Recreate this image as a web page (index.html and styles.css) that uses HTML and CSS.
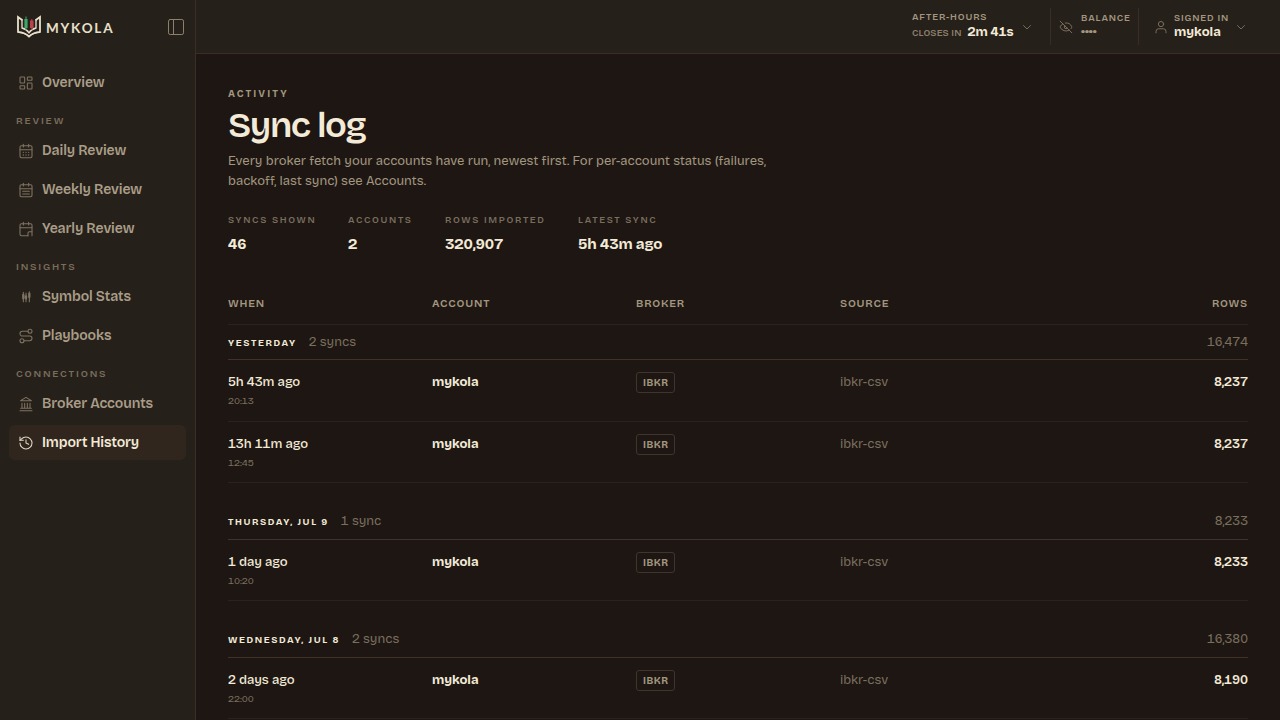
FILE: index.html
```html
<!DOCTYPE html>
<html lang="en">
<head>
    <meta charset="UTF-8">
    <meta name="viewport" content="width=device-width, initial-scale=1.0">
    <title>Mykola - Sync log</title>
    <link rel="stylesheet" href="styles.css">
</head>
<body>
<div class="app">
  <aside class="sidebar">
    <div class="brand">
      <svg class="brand-mark" viewBox="0 0 24 24" fill="none" stroke="#e9e0cc" stroke-width="1.8">
        <path d="M5.500 5.200 1 2v14.800c4.500.2 8 1.800 11 4.700 3-2.900 6.500-4.500 11-4.700V2l-4.500 3.200"/>
        <path d="M1 17.500c4.500 0 8 1.200 11 3.700 3-2.500 6.500-3.700 11-3.700" stroke-width="1.200"/>
        <path d="M5 4.800v8.200c3 .8 5.500 2.400 7 4.800 1.500-2.400 4-4 7-4.800V4.800" stroke-width="1.300"/>
        <path d="M9 1.500v13.500" stroke="#3fa66b" stroke-width="1"/>
        <path d="M9 4v9" stroke="#3fa66b" stroke-width="3.200"/>
        <path d="M14.800 4v11" stroke="#b8434b" stroke-width="1"/>
        <path d="M14.800 5.500v7.500" stroke="#b8434b" stroke-width="3.600"/>
      </svg>
      <span class="brand-name">MYKOLA</span>
      <svg class="icon toggle" viewBox="0 0 24 24"><rect x="3" y="3" width="18" height="18" rx="2"/><path d="M9 3v18"/></svg>
    </div>

    <nav class="nav">
      <a class="nav-item">
        <svg class="icon" viewBox="0 0 24 24"><rect x="3" y="3" width="7" height="9" rx="1"/><rect x="14" y="3" width="7" height="5" rx="1"/><rect x="14" y="12" width="7" height="9" rx="1"/><rect x="3" y="16" width="7" height="5" rx="1"/></svg>
        <span>Overview</span>
      </a>

      <p class="nav-label">Review</p>
      <a class="nav-item">
        <svg class="icon" viewBox="0 0 24 24"><path d="M8 2v4M16 2v4M3 10h18"/><rect x="3" y="4" width="18" height="18" rx="2"/><path d="M8 14h.01M12 14h.01M16 14h.01M8 18h.01M12 18h.01M16 18h.01" stroke-width="2"/></svg>
        <span>Daily Review</span>
      </a>
      <a class="nav-item">
        <svg class="icon" viewBox="0 0 24 24"><path d="M8 2v4M16 2v4M3 10h18"/><rect x="3" y="4" width="18" height="18" rx="2"/><path d="M7 14h10M7 18h10"/></svg>
        <span>Weekly Review</span>
      </a>
      <a class="nav-item">
        <svg class="icon" viewBox="0 0 24 24"><path d="M8 2v4M16 2v4M3 10h18"/><path d="M21 16V6a2 2 0 0 0-2-2H5a2 2 0 0 0-2 2v14a2 2 0 0 0 2 2h10"/><path d="M15 22v-4a2 2 0 0 1 2-2h4M21 16v6"/></svg>
        <span>Yearly Review</span>
      </a>

      <p class="nav-label">Insights</p>
      <a class="nav-item">
        <svg class="icon" viewBox="0 0 24 24"><path d="M8 5v14M12 6v13M17 4v15"/><path d="M8 9v5M12 11v3M17 7v5" stroke-width="3.500"/></svg>
        <span>Symbol Stats</span>
      </a>
      <a class="nav-item">
        <svg class="icon" viewBox="0 0 24 24"><circle cx="6" cy="19" r="3"/><path d="M9 19h8.500a3.500 3.500 0 0 0 0-7h-11a3.500 3.500 0 0 1 0-7H15"/><circle cx="18" cy="5" r="3"/></svg>
        <span>Playbooks</span>
      </a>

      <p class="nav-label">Connections</p>
      <a class="nav-item">
        <svg class="icon" viewBox="0 0 24 24"><path d="M3 22h18M6 18v-7M10 18v-7M14 18v-7M18 18v-7M4 18.500h16M12 2l8 5H4z"/></svg>
        <span>Broker Accounts</span>
      </a>
      <a class="nav-item active">
        <svg class="icon" viewBox="0 0 24 24"><path d="M3 12a9 9 0 1 0 9-9 9.750 9.750 0 0 0-6.740 2.740L3 8"/><path d="M3 3v5h5M12 7v5l4 2"/></svg>
        <span>Import History</span>
      </a>
    </nav>
  </aside>

  <div class="page">
    <header class="topbar">
      <div class="status market">
        <div>
          <p class="status-label">After-hours</p>
          <p class="status-line"><span class="closes">Closes in</span><span class="status-value">2m 41s</span></p>
        </div>
        <svg class="icon chevron" viewBox="0 0 24 24"><path d="m5 9 7 7 7-7"/></svg>
      </div>
      <div class="status balance">
        <svg class="icon" viewBox="0 0 24 24"><path d="M10.733 5.076a10.744 10.744 0 0 1 11.205 6.575 1 1 0 0 1 0 .696 10.747 10.747 0 0 1-1.444 2.490"/><path d="M14.084 14.158a3 3 0 0 1-4.242-4.242"/><path d="M17.479 17.499a10.750 10.750 0 0 1-15.417-5.151 1 1 0 0 1 0-.696 10.750 10.750 0 0 1 4.446-5.143"/><path d="m2 2 20 20"/></svg>
        <div>
          <p class="status-label">Balance</p>
          <p class="masked">••••</p>
        </div>
      </div>
      <div class="status user">
        <svg class="icon" viewBox="0 0 24 24"><circle cx="12" cy="7" r="4.500"/><path d="M3.500 22v-2.500a4.500 4.500 0 0 1 4.500-4.500h8a4.500 4.500 0 0 1 4.500 4.500V22"/></svg>
        <div>
          <p class="status-label">Signed in</p>
          <p class="status-value">mykola</p>
        </div>
        <svg class="icon chevron" viewBox="0 0 24 24"><path d="m5 9 7 7 7-7"/></svg>
      </div>
    </header>

    <main class="content">
      <p class="eyebrow">Activity</p>
      <h1>Sync log</h1>
      <p class="intro">Every broker fetch your accounts have run, newest first. For per-account status (failures,<br>backoff, last sync) see Accounts.</p>

      <dl class="stats">
        <div class="s1"><dt>Syncs shown</dt><dd>46</dd></div>
        <div class="s2"><dt>Accounts</dt><dd>2</dd></div>
        <div class="s3"><dt>Rows imported</dt><dd>320,907</dd></div>
        <div><dt>Latest sync</dt><dd>5h 43m ago</dd></div>
      </dl>

      <section class="log">
        <div class="log-head">
          <span>When</span><span>Account</span><span>Broker</span><span>Source</span><span class="num">Rows</span>
        </div>

        <div class="group">
          <div class="group-head"><h2>Yesterday</h2><span>2 syncs</span><span class="total">16,474</span></div>
          <div class="log-row">
            <div><p class="when">5h 43m ago</p><p class="time">20:13</p></div>
            <strong>mykola</strong>
            <div><span class="badge">IBKR</span></div>
            <span class="source">ibkr-csv</span>
            <span class="num">8,237</span>
          </div>
          <div class="log-row">
            <div><p class="when">13h 11m ago</p><p class="time">12:45</p></div>
            <strong>mykola</strong>
            <div><span class="badge">IBKR</span></div>
            <span class="source">ibkr-csv</span>
            <span class="num">8,237</span>
          </div>
        </div>

        <div class="group">
          <div class="group-head"><h2>Thursday, Jul 9</h2><span>1 sync</span><span class="total">8,233</span></div>
          <div class="log-row">
            <div><p class="when">1 day ago</p><p class="time">10:20</p></div>
            <strong>mykola</strong>
            <div><span class="badge">IBKR</span></div>
            <span class="source">ibkr-csv</span>
            <span class="num">8,233</span>
          </div>
        </div>

        <div class="group">
          <div class="group-head"><h2>Wednesday, Jul 8</h2><span>2 syncs</span><span class="total">16,380</span></div>
          <div class="log-row">
            <div><p class="when">2 days ago</p><p class="time">22:00</p></div>
            <strong>mykola</strong>
            <div><span class="badge">IBKR</span></div>
            <span class="source">ibkr-csv</span>
            <span class="num">8,190</span>
          </div>
        </div>
      </section>
    </main>
  </div>
</div>
</body>
</html>
```
FILE: styles.css
```css
* {
    box-sizing: border-box;
}

body, h1, h2, p, dl, dd {
    margin: 0;
}

body {
    height: 720px;
    overflow: hidden;
    background-color: #1d1613;
    color: #f3ead7;
    font-family: "Bricolage Grotesque", Inter, sans-serif;
    font-size: 13px;
    font-optical-sizing: none;
    font-variant-numeric: tabular-nums;
    line-height: 20px;
}

.app {
    display: flex;
    height: 720px;
}

.icon {
    width: 16px;
    height: 16px;
    flex: none;
    fill: none;
    stroke: currentColor;
    stroke-width: 1.6;
    stroke-linecap: round;
    stroke-linejoin: round;
}

/* sidebar */

.sidebar {
    width: 196px;
    flex: none;
    background-color: #26201a;
    border-right: 1px solid #3d2c25;
}

.brand {
    display: flex;
    align-items: center;
    height: 54px;
    padding: 0 9px 0 17px;
}

.brand-mark {
    width: 24px;
    height: 24px;
}

.brand-name {
    margin-left: 5px;
    padding-top: 1px;
    color: #e9e0cc;
    font-family: Lato, sans-serif;
    font-size: 13.5px;
    font-weight: 700;
    letter-spacing: 1.8px;
}

.toggle {
    width: 20px;
    height: 20px;
    margin-left: auto;
    color: #8d806d;
    stroke-width: 1.2;
}

.nav {
    padding: 11px 9px;
}

.nav-item {
    display: flex;
    align-items: center;
    gap: 8px;
    height: 35px;
    margin-bottom: 4px;
    padding-left: 9px;
    border-radius: 6px;
    color: #a99d88;
    font-size: 14px;
    font-weight: 600;
    letter-spacing: -0.12px;
}

.nav-item .icon {
    color: #7f7361;
}

.active {
    background-color: #30261e;
    color: #f3ead7;
}

.active .icon {
    color: #e0d6c2;
}

.nav-label {
    height: 29px;
    padding: 7px 7px 0;
    color: #796d5c;
    font-size: 10px;
    font-weight: 600;
    letter-spacing: 1.8px;
    text-transform: uppercase;
}

/* top bar */

.page {
    flex: 1;
}

.topbar {
    display: flex;
    justify-content: flex-end;
    align-items: center;
    height: 54px;
    padding-right: 33px;
    background-color: #26201a;
    border-bottom: 1px solid #3d2c25;
}

.status {
    display: flex;
    align-items: center;
    height: 37px;
    color: #7f7361;
}

.market {
    width: 138px;
}

.balance {
    width: 89px;
    padding-left: 8px;
    gap: 8px;
    border-left: 1px solid #382c24;
    border-right: 1px solid #382c24;
}

.balance .icon {
    width: 14px;
    height: 14px;
}

.user {
    width: 108px;
    padding-left: 15px;
    gap: 6px;
}

.user .icon {
    width: 14px;
    height: 14px;
}

.status .chevron {
    width: 12px;
    height: 12px;
    margin-left: auto;
    stroke-width: 1.8;
}

.market .chevron {
    margin-right: 17px;
}

.status-label {
    color: #a3967f;
    font-size: 9.5px;
    font-weight: 600;
    line-height: 12px;
    letter-spacing: 0.85px;
    text-transform: uppercase;
    white-space: nowrap;
}

.balance .status-label,
.user .status-label {
    margin-top: -2px;
}

.status-line {
    display: flex;
    align-items: baseline;
    gap: 6px;
    line-height: 19px;
    white-space: nowrap;
}

.closes {
    color: #8b7f6b;
    font-size: 9.5px;
    font-weight: 600;
    letter-spacing: 0.15px;
    text-transform: uppercase;
}

.status-value {
    color: #f3ead7;
    font-weight: 700;
    line-height: 16px;
}

.market .status-value {
    line-height: 19px;
    letter-spacing: -0.1px;
}

.masked {
    color: #a3967f;
    font-size: 11px;
    font-weight: 800;
    line-height: 16px;
}

/* page heading */

.content {
    padding: 32px;
}

.eyebrow {
    height: 16px;
    color: #a3967f;
    font-size: 10px;
    font-weight: 700;
    line-height: 16px;
    letter-spacing: 2.05px;
    text-transform: uppercase;
}

h1 {
    margin-top: 4px;
    font-size: 36px;
    font-weight: 600;
    line-height: 40px;
    letter-spacing: -1.35px;
}

.intro {
    margin-top: 5px;
    color: #a3967f;
    white-space: nowrap;
}

.stats {
    display: flex;
    gap: 32px;
    margin-top: 21px;
}

.stats dt {
    color: #796d5c;
    font-size: 9.5px;
    font-weight: 600;
    line-height: 16px;
    letter-spacing: 1.65px;
    text-transform: uppercase;
    white-space: nowrap;
}

.stats dd {
    margin-top: 6px;
    font-size: 15px;
    font-weight: 700;
    letter-spacing: -0.1px;
    white-space: nowrap;
}

.s1 { width: 88px; }
.s2 { width: 65px; }
.s3 { width: 101px; }

/* sync table */

.log {
    margin-top: 29px;
}

.log-head,
.log-row {
    display: grid;
    grid-template-columns: repeat(5, 1fr);
    border-bottom: 1px solid #2d211d;
}

.log-head {
    height: 42px;
    padding-top: 11px;
    color: #a3967f;
    font-size: 11px;
    font-weight: 600;
    letter-spacing: 0.8px;
    text-transform: uppercase;
}

.log-row {
    height: 61.5px;
    padding-top: 12px;
    letter-spacing: -0.05px;
}

.group + .group {
    padding-top: 21px;
}

.group-head {
    display: flex;
    align-items: center;
    gap: 12px;
    height: 35px;
    border-bottom: 1px solid #40312b;
    color: #7a6e5d;
}

.group + .group .group-head {
    height: 35.5px;
    padding-bottom: 1px;
}

.group-head h2 {
    padding-top: 2px;
    color: #f3ead7;
    font-size: 9.5px;
    font-weight: 700;
    letter-spacing: 1.6px;
    text-transform: uppercase;
}

.total {
    margin-left: auto;
}

.when {
    font-weight: 500;
}

.time {
    margin-top: 2px;
    color: #7a6e5d;
    font-size: 10px;
    line-height: 14px;
}

.badge {
    display: inline-block;
    height: 21px;
    padding: 0 6px;
    border: 1px solid #3f352c;
    border-radius: 3px;
    color: #a3967f;
    font-size: 10px;
    font-weight: 700;
    line-height: 20px;
    letter-spacing: 0.5px;
}

.source {
    color: #7a6e5d;
}

.num {
    text-align: right;
}

.log-row .num {
    font-weight: 600;
}
```
